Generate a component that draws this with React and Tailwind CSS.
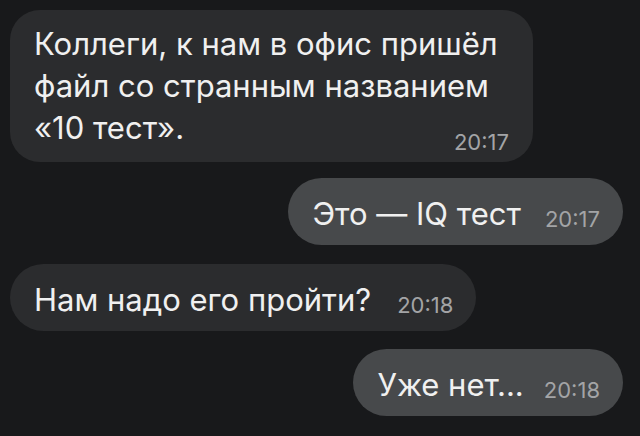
import React from "react";

const font = { fontFamily: "Inter, Roboto, 'Noto Sans', sans-serif" };

function Time({ children }) {
  return <span className="text-[22px] text-[#a3a4a6] leading-none whitespace-nowrap">{children}</span>;
}

function Bubble({ text, time, out, gap }) {
  return (
    <div className={`flex items-end rounded-[34px] h-[67px] pl-[24px] pr-[23px] pb-[16px] ${out ? "self-end bg-[#47494b]" : "self-start bg-[#2b2c2e]"}`}>
      <span className={`text-[31px] leading-none text-[#f0f0f0] whitespace-nowrap ${gap}`}>{text}</span>
      <span className="mb-[-4px]"><Time>{time}</Time></span>
    </div>
  );
}

export default function App() {
  return (
    <div className="w-[640px] h-[436px] bg-[#18191b] overflow-hidden" style={font}>
      <div className="flex flex-col pl-[10px] pt-[10px] pr-[17px]">
        <div className="self-start w-[523px] h-[152px] bg-[#2b2c2e] rounded-[30px] pl-[24px] pr-[24px] pt-[13px]">
          <p className="text-[31px] leading-[42px] text-[#f0f0f0] whitespace-nowrap">
            Коллеги, к нам в офис пришёл<br />файл со странным названием<br />«10 тест».
          </p>
          <div className="flex justify-end mt-[-18px]"><Time>20:17</Time></div>
        </div>
        <div className="mt-[16px]"></div>
        <Bubble out text="Это — IQ тест" time="20:17" gap="mr-[24px]" />
        <div className="mt-[19px]"></div>
        <Bubble text="Нам надо его пройти?" time="20:18" gap="mr-[26px]" />
        <div className="mt-[18px]"></div>
        <Bubble out text="Уже нет..." time="20:18" gap="mr-[20px]" />
      </div>
    </div>
  );
}
